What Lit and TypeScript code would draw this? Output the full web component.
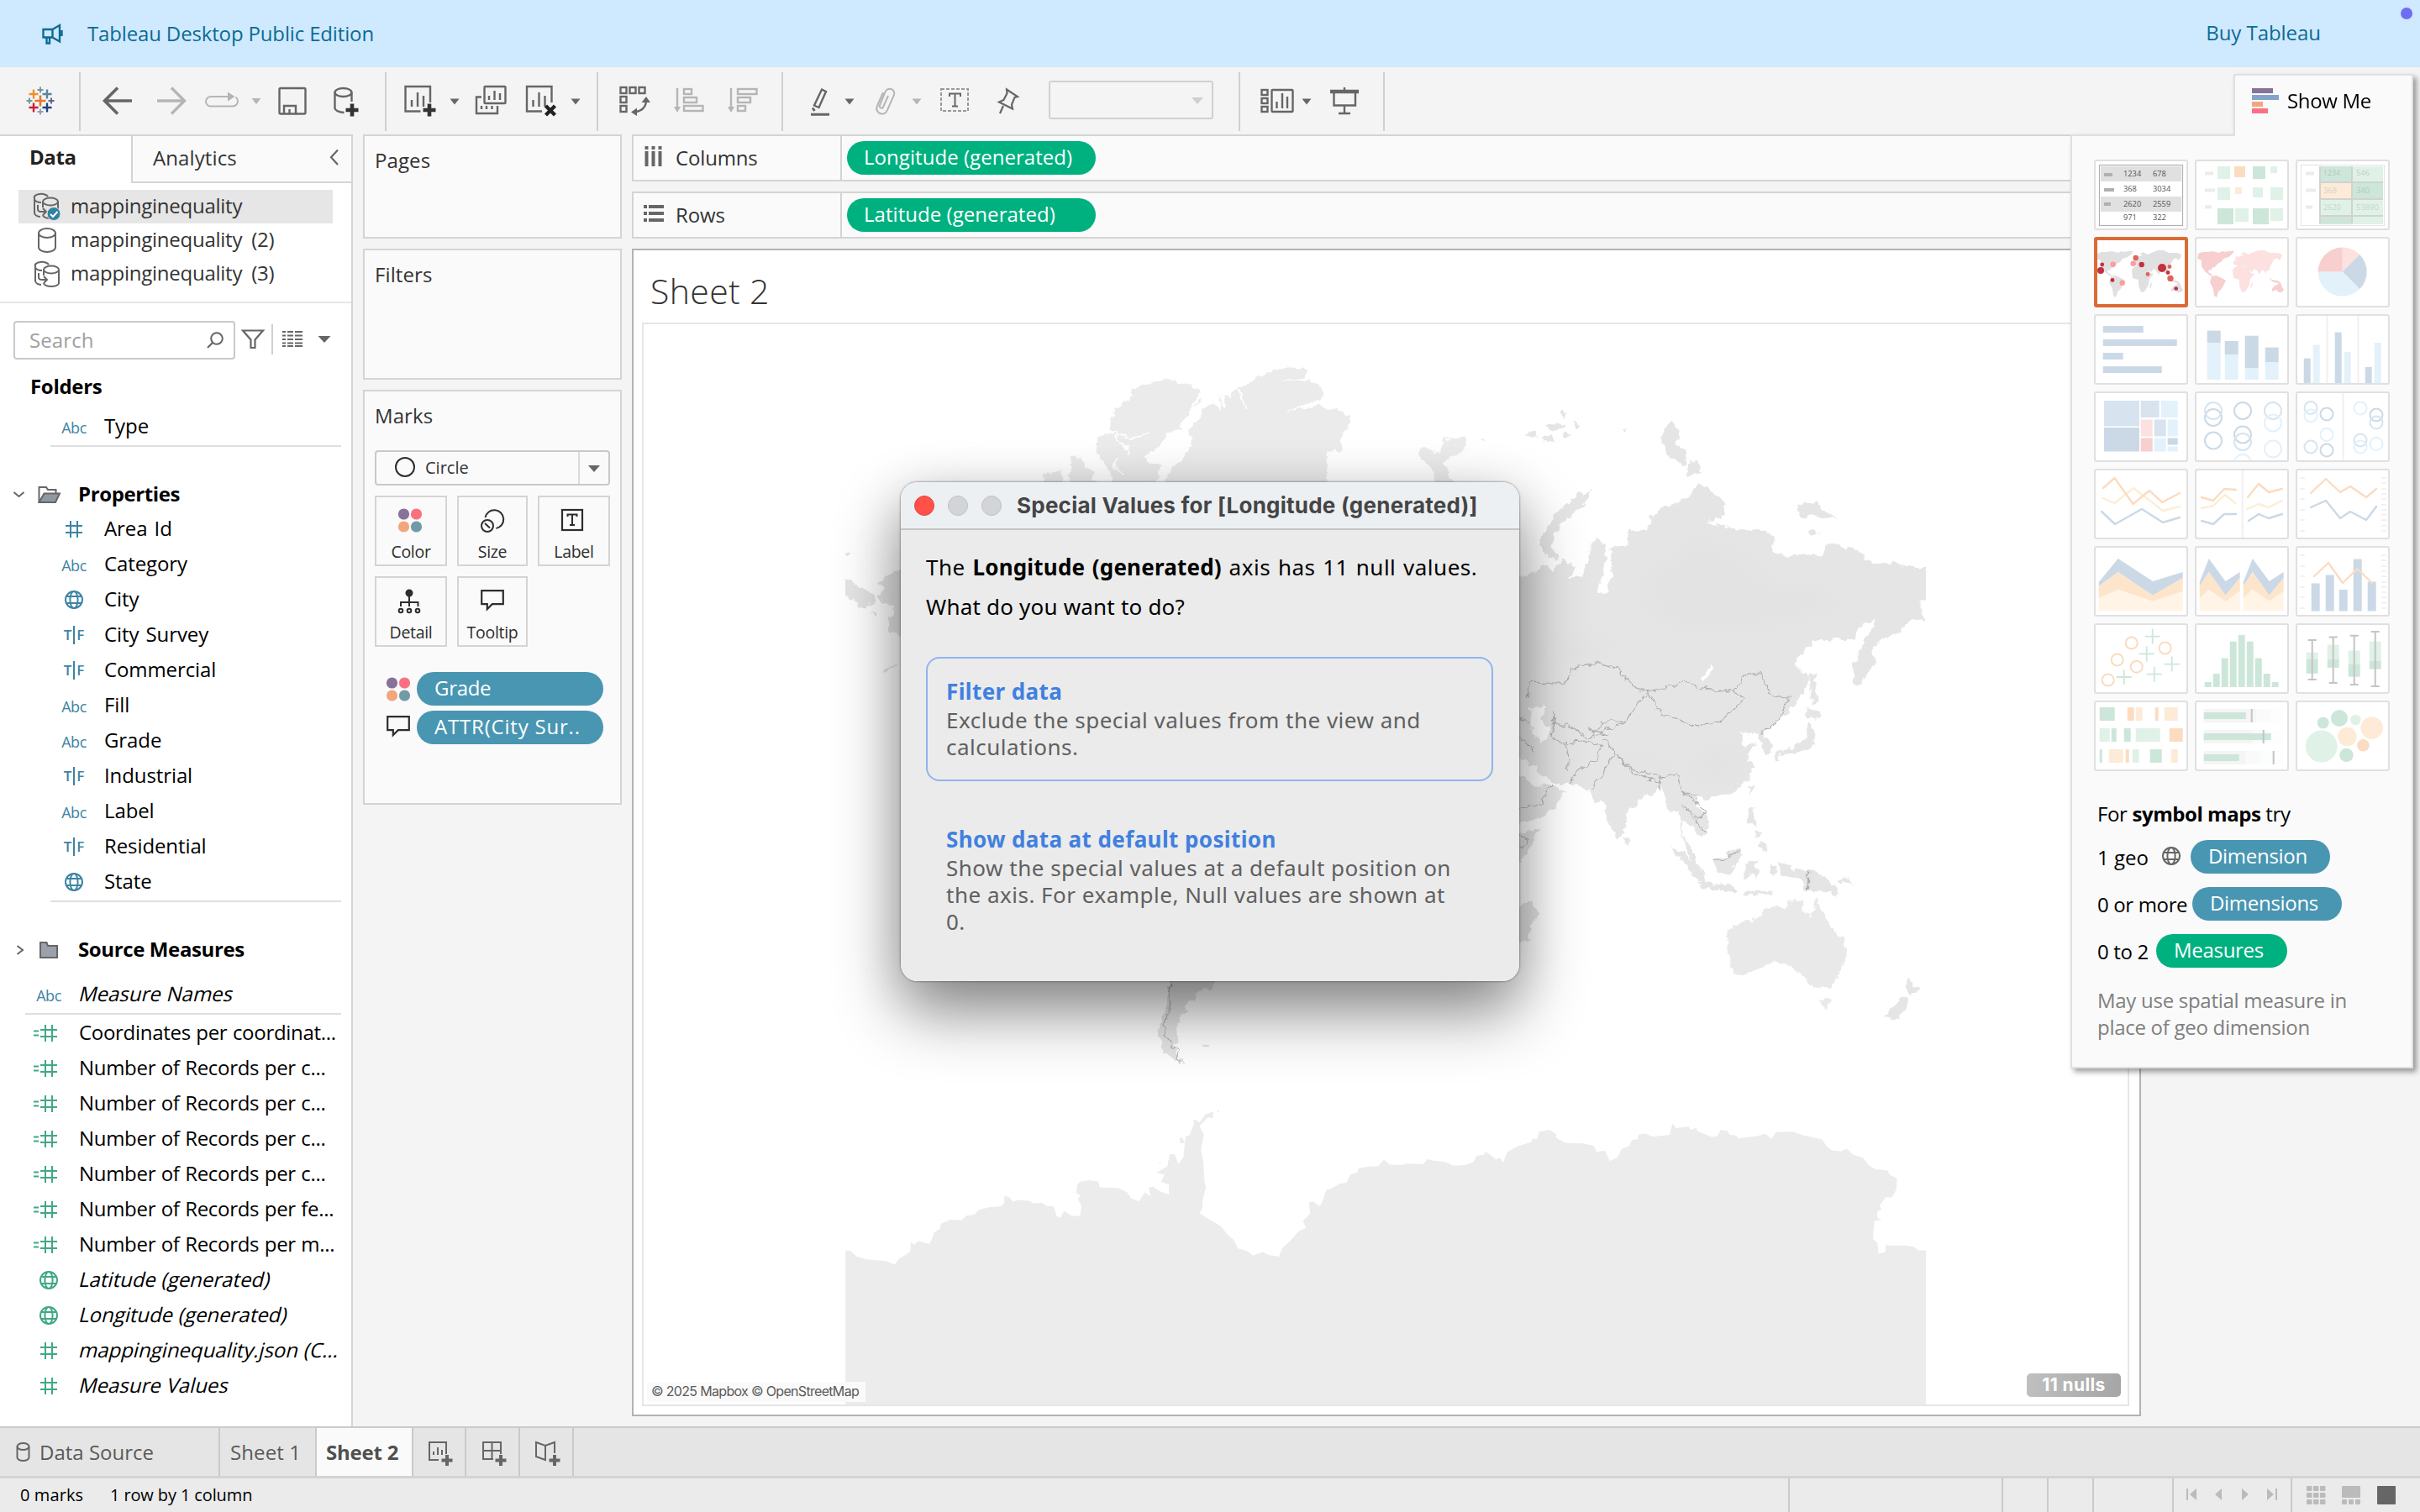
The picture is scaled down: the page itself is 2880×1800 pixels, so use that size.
import { LitElement, html, svg, css } from "lit";
import { customElement } from "lit/decorators.js";

const G = "#666666";
const L = "#b5b5b5";
const D = "#333333";

const pts = (a: number[][]) => a.map((p) => p.join(",")).join(" ");
const caret = (x: number, y: number, c = G, w = 12, h = 8) =>
  svg`<path d="M${x - w / 2} ${y - h / 2}h${w}l${-w / 2} ${h}z" fill=${c} stroke="none" />`;
const plus = (x: number, y: number, r: number, c: string, w: number) =>
  svg`<path d="M${x - r} ${y}h${2 * r}M${x} ${y - r}v${2 * r}" stroke=${c} stroke-width=${w} fill="none" />`;

/* A slice of the window, x0..x1 wide, drawn in window coordinates. */
const cell = (x0: number, x1: number, y0: number, y1: number, body: unknown) =>
  html`<svg class="cell" width=${x1 - x0} height=${y1 - y0} viewBox="${x0} ${y0} ${x1 - x0} ${y1 - y0}" fill="none" stroke=${G} stroke-width="2.4">${body}</svg>`;
const tool = (x0: number, x1: number, body: unknown) => cell(x0, x1, 86, 156, body);

/* ---------- field icons ---------- */
const hash = (c: string) => svg`<path d="M-10 -4H10M-10 4H10M-4 -10V10M4 -10V10" stroke=${c} stroke-width="2" fill="none" />`;
const globe = (c: string) => svg`<g fill="none" stroke=${c} stroke-width="2"><circle r="10" /><ellipse rx="4.6" ry="10" /><path d="M-9 -4H9M-9 4H9" /></g>`;
const kinds: Record<string, () => unknown> = {
  abc: () => html`<span class="abc">Abc</span>`,
  tf: () => html`<span class="tf"><b>T</b><i></i><b>F</b></span>`,
  num: () => html`<svg width="24" height="24" viewBox="-12 -12 24 24">${hash("#3d84a3")}</svg>`,
  geo: () => html`<svg width="24" height="24" viewBox="-12 -12 24 24">${globe("#3d84a3")}</svg>`,
  gnum: () => html`<svg width="24" height="24" viewBox="-12 -12 24 24">${hash("#41a884")}</svg>`,
  ggeo: () => html`<svg width="24" height="24" viewBox="-12 -12 24 24">${globe("#41a884")}</svg>`,
  calc: () => html`<svg width="42" height="24" viewBox="-21 -12 42 24"><path d="M-18 -2.5h6M-18 2.5h6" stroke="#41a884" stroke-width="2" />${hash("#41a884")}</svg>`,
};

const properties: [string, string][] = [
  ["num", "Area Id"], ["abc", "Category"], ["geo", "City"], ["tf", "City Survey"], ["tf", "Commercial"],
  ["abc", "Fill"], ["abc", "Grade"], ["tf", "Industrial"], ["abc", "Label"], ["tf", "Residential"], ["geo", "State"],
];
const measures: [string, string, boolean][] = [
  ["calc", "Coordinates per coordinat...", false],
  ["calc", "Number of Records per c...", false],
  ["calc", "Number of Records per c...", false],
  ["calc", "Number of Records per c...", false],
  ["calc", "Number of Records per c...", false],
  ["calc", "Number of Records per fe...", false],
  ["calc", "Number of Records per m...", false],
  ["ggeo", "Latitude (generated)", true],
  ["ggeo", "Longitude (generated)", true],
  ["gnum", "mappinginequality.json (C...", true],
  ["gnum", "Measure Values", true],
];

/* ---------- chart thumbnails, 112 x 84 ---------- */
const B = "#cbd9e6", M = "#d7e4ef", LB = "#e3f1fb", P = "#f6cfce", LP = "#fde0e0";
const GR = "#cde6da", LG = "#e0f2e7", O = "#fbdcc0", LO = "#fdebd8", Y = "#fdeed4";
const R = (x: number, y: number, w: number, h: number, f: string) => svg`<rect x=${x} y=${y} width=${w} height=${h} fill=${f} />`;
const C = (x: number, y: number, r: number, f: string) => svg`<circle cx=${x} cy=${y} r=${r} fill=${f} />`;
const ring = (x: number, y: number, r: number, c: string) => svg`<circle cx=${x} cy=${y} r=${r} fill="none" stroke=${c} stroke-width="2" />`;
const line = (c: string, a: number[][]) => svg`<polyline points=${pts(a)} fill="none" stroke=${c} stroke-width="2.4" stroke-linejoin="round" stroke-linecap="round" />`;
const poly = (c: string, a: number[][]) => svg`<polygon points=${pts(a)} fill=${c} />`;
const num = (x: number, y: number, t: string, c: string, w: number) =>
  svg`<text x=${x} y=${y} fill=${c} font-size="9" textLength=${w} lengthAdjust="spacingAndGlyphs">${t}</text>`;
const dashes = (c: string) => [R(12, 14.5, 10, 4, c), R(12, 34.5, 12, 4, c), R(12, 54.5, 8, 4, c)];
const ticks = svg`<path d="M5 11h6M5 24h6M5 36h6M5 49h6M5 61h6M5 74h6M102 11h6M102 17h6M102 24h6M102 30h6M102 36h6M102 43h6M102 49h6M102 55h6M102 61h6M102 68h6M102 74h6" stroke="#eeeeee" stroke-width="1.6" />`;
const mini = (america: string, rest: string) => svg`
  <g fill=${america}>
    <path d="M4 20l5-2 6 0 6-1 8 2 4-1 4 3 2 3-5 2-3 4-4 2-3 4-4 1 0 3-3-1-1 3 3 2 3 3-4-1-6-5-4-6 0-7-5-2zM29 18l6-1 0 3zM35 18l6-1 6 0-3 4-4 3-2 1-2-4z"/>
    <path d="M20 47l6-1 6 3 5 3-3 6-3 5-3 2-1 4-1 3-3-2-1-8-4-8z"/>
    <path d="M92 62l3-4 3-1 2-2 3 1 1 4 2 3-3 3-3 0-3-3-5 2zM88 48l4 5 7 2 4 0-5-3-6-1z"/>
  </g>
  <g fill=${rest}>
    <path d="M45 39l4-4 6-1 4 2 5 1 3 6 4 1-5 6-1 7-5 8-4 1-3-8 0-7-7-2zM67 56l2-2-1 6-2 1z"/>
    <path d="M46 33l0-4 4-2 0-2 4-2 2 0 2-2-4 0 4-3 6 3 4-2 8-3 7 0 6 3 10 0 5 2-1 4-3 3-2-3-4 2-2 4-2 4-2 5-3 1 0 4-2-4-3-2-3 6-3-5-3-2-3 4-3-3-4-2-4-3-4 1-5-2zM50 27l-2-1 2-4 1 2z"/>
  </g>`;
const area = svg`${poly(B, [[5.7, 43], [28.7, 15], [70, 42], [105.7, 31], [105.7, 38], [70, 59], [28.7, 31], [5.7, 48]])}
  ${poly("#fde5cb", [[5.7, 48], [28.7, 31], [70, 58.5], [105.7, 38], [105.7, 54], [70, 66], [28.7, 52], [5.7, 62.5]])}
  ${poly("#fff4e6", [[5.7, 62.5], [28.7, 52], [70, 66], [105.7, 54], [105.7, 77.5], [5.7, 77.5]])}`;
const boxes = [[12.7, 34.7, 42.5, 59.8, 20, 67], [37.7, 25.6, 43, 52.9, 16.5, 71], [62.7, 32.5, 48.6, 63.7, 14.7, 73], [87.7, 21.7, 44.7, 54.6, 10, 75]];
const worldDots: [number, number, number, string][] = [
  [9.7, 33, 2.4, "#c3303f"], [8, 40, 4, "#c3303f"], [56.7, 33, 3.2, "#c3303f"], [81, 37, 5, "#c3303f"], [88, 42.5, 2.4, "#c3303f"],
  [22, 51.5, 2.4, "#c3303f"], [97.7, 61.6, 2.4, "#c3303f"], [49.7, 25, 3.2, "#e0645a"], [90, 35.5, 2.4, "#e0645a"],
  [64, 44.5, 2.4, "#e0645a"], [91, 49.4, 3.7, "#e0645a"], [22.7, 32.7, 3.2, "#fb9d9b"], [46.7, 31.8, 3.2, "#fb9d9b"], [33.7, 54.7, 3.2, "#fb9d9b"],
];
const thumbs: unknown[] = [
  svg`<rect x="6.5" y="6.5" width="99" height="72" fill="none" stroke="#b0b0b0" stroke-width="1.2" />${R(8, 8, 96, 18, "#e0e0e0")}${R(8, 44, 96, 18, "#e0e0e0")}
    ${R(12, 16, 10, 4, "#b0b0b0")}${R(12, 34, 12, 4, "#b0b0b0")}${R(12, 51, 8, 4, "#b0b0b0")}
    ${[["1234", "678"], ["368", "3034"], ["2620", "2559"], ["971", "322"]].map((r, i) => [num(35, [20, 38, 56, 72][i], r[0], "#555", r[0].length * 5.3), num(70, [20, 38, 56, 72][i], r[1], "#555", r[1].length * 5.3)])}`,
  svg`${dashes("#ebebeb")}${R(27, 8, 15, 15, LG)}${R(47, 8, 13, 13, O)}${R(69, 8, 15, 15, GR)}${R(90, 8, 8, 8, LG)}${R(27, 33, 15, 15, LG)}${R(48, 33, 8, 8, LO)}${R(69, 33, 12, 12, LG)}${R(90, 33, 15, 15, LG)}${R(27, 58, 19, 19, GR)}${R(48, 58, 16, 16, LG)}${R(69, 58, 19, 19, GR)}${R(90, 58, 15, 15, LG)}`,
  svg`<rect x="6.5" y="6.5" width="99" height="72" fill="none" stroke="#e6e6e6" stroke-width="1.2" />${dashes("#ebebeb")}${R(28, 8, 76, 68.5, "#d2d2d2")}
    ${R(30, 8, 36, 18, GR)}${R(68, 8, 36, 18, LG)}${R(30, 28, 36, 18, LO)}${R(68, 28, 36, 18, GR)}${R(30, 48, 36, 18, LG)}${R(68, 48, 36, 18, LG)}${R(30, 68, 36, 8.5, GR)}${R(68, 68, 36, 8.5, LG)}
    ${num(33, 19, "1234", "#b4c9be", 20)}${num(72, 19, "546", "#c2cdc8", 16)}${num(33, 40, "368", "#d8cfc5", 16)}${num(72, 40, "340", "#b4c9be", 16)}${num(33, 60, "2620", "#c8d3cd", 21)}${num(72, 60, "53890", "#c8d3cd", 27)}`,
  svg`${mini("#e0e0e0", "#e0e0e0")}${worldDots.map((d) => C(d[0], d[1], d[2], d[3]))}`,
  mini(P, LP),
  svg`<g transform="translate(55.7,41.6)"><path d="M0 0V-29A29 29 0 0 1 20.5 -20.5z" fill=${LP} /><path d="M0 0L20.5 -20.5A29 29 0 0 1 20.5 20.5z" fill=${B} /><path d="M0 0L20.5 20.5A29 29 0 0 1 -29 0z" fill=${LB} /><path d="M0 0H-29A29 29 0 0 1 0 -29z" fill=${P} /></g>`,
  svg`${R(10.7, 14, 48, 8, B)}${R(10.7, 30, 88, 8, B)}${R(10.7, 46, 24, 8, B)}${R(10.7, 62, 70, 8, B)}`,
  svg`${[[14.7, 19.6, 34], [35.7, 32, 48], [59.7, 25.7, 64], [83.7, 39.6, 57.5]].map((b) => [R(b[0], b[1], 16, b[2] - b[1], B), R(b[0], b[2], 16, 78 - b[2], LB)])}`,
  svg`<path d="M37.5 2V82M74.5 2V82" stroke="#f0f0f0" stroke-width="2" />${[[9.7, 52.6, 0], [20.7, 36.7, 1], [46.7, 21.6, 0], [57.7, 45, 1], [82.7, 63, 0], [93.7, 34, 1]].map((b) => R(b[0], b[1], 8, 82 - b[1], b[2] ? LB : B))}`,
  svg`${R(12, 11, 42, 30.5, M)}${R(12, 43, 42, 28.5, B)}${R(55.7, 11, 22, 20, M)}${R(79.7, 11, 20, 20, LB)}${R(55.7, 33.5, 14, 20, LP)}${R(71.7, 33.5, 14, 20, M)}${R(87.7, 33.5, 12, 20, LB)}${R(55.7, 55.5, 14, 16, P)}${R(71.7, 55.5, 14, 16, LB)}${R(87.7, 55.5, 12, 8, B)}${R(87.7, 65.5, 12, 6, LB)}`,
  svg`${ring(22, 31, 10, B)}${ring(22, 23, 10, M)}${ring(57, 23, 10, B)}${ring(93, 23, 10, M)}${ring(93, 37.5, 10, LB)}${ring(22, 58.5, 10, B)}${ring(57, 51.5, 10, B)}${ring(57, 60, 10, M)}${ring(93, 68.5, 10, LB)}${ring(57, 85, 10, LB)}`,
  svg`<path d="M56.5 2V82" stroke="#f0f0f0" stroke-width="2" />${ring(18, 19.5, 7.5, M)}${ring(18, 29, 7.5, LB)}${ring(37, 27, 7.5, B)}${ring(37, 51.5, 7.5, LB)}${ring(18, 66, 7.5, M)}${ring(37, 70, 7.5, B)}${ring(77, 20, 7.5, LB)}${ring(96, 28, 7.5, B)}${ring(96, 37, 7.5, M)}${ring(77, 58, 7.5, M)}${ring(77, 66, 7.5, LB)}${ring(96, 62.5, 7.5, LB)}`,
  svg`${line(Y, [[10, 35], [24.5, 41], [47, 23], [82, 50], [102, 45]])}${line(O, [[11, 23], [24.5, 11], [46.5, 42], [66, 26], [81, 40], [102, 29]])}${line(B, [[9, 51], [25, 66], [57, 48], [82, 64], [102, 58]])}`,
  svg`<path d="M56.7 2V82" stroke="#f0f0f0" stroke-width="2" />${line(O, [[8, 34], [22, 38], [35, 24], [49, 25]])}${line(O, [[63, 34], [76, 18], [88, 28], [104, 24]])}${line(Y, [[8, 47], [22, 44], [36, 31], [48, 41]])}${line(Y, [[62, 48], [76, 42], [88, 46], [104, 38]])}${line(B, [[8, 62], [22, 66], [35, 54], [49, 54]])}${line(B, [[64, 62], [76, 54], [88, 59], [104, 54]])}`,
  svg`${ticks}${line(O, [[18, 29], [36, 12], [53, 28], [65, 21], [84, 34], [96, 24]])}${line(B, [[18, 46], [36, 38], [53, 59], [65, 51], [84, 61], [96, 45]])}`,
  area,
  svg`<g transform="translate(5.7,0) scale(.48,1) translate(-5.7,0)">${area}</g><g transform="translate(57.7,0) scale(.48,1) translate(-5.7,0)">${area}</g>`,
  svg`${ticks}${[[18.7, 44.5], [35.7, 34.5], [51.7, 52], [68.7, 15.6], [85.7, 42.5]].map((b) => R(b[0], b[1], 10, 77.5 - b[1], B))}${line(O, [[22, 36], [39, 20], [56, 44], [73.5, 27], [91, 44]])}`,
  svg`${[[44.7, 23.5], [84.7, 29.5], [27.7, 43.5], [50.7, 51.7], [16.7, 67.5]].map((c) => ring(c[0], c[1], 7, O))}${[[69.7, 15.6], [62.7, 36.4], [92.7, 48.6], [71.7, 60.7], [35.7, 64]].map((c) => plus(c[0], c[1], 9, GR, 1.8))}`,
  svg`${[70, 60, 41.6, 21.7, 13.9, 21.7, 41.6, 60, 70].map((t, i) => R(11.7 + i * 10, t, 8, 76 - t, GR))}`,
  svg`${boxes.map((b) => svg`${R(b[0], b[1], 14, b[2] - b[1], LG)}${R(b[0], b[2], 14, b[3] - b[2], GR)}<path d="M${b[0] + 7} ${b[4]}V${b[5]}M${b[0] + 2} ${b[4]}h10M${b[0] + 2} ${b[5]}h10" stroke="#c4c4c4" stroke-width="2" />`)}`,
  svg`${[[6.7, 18, GR], [39.7, 8, O], [49.7, 8, LO], [72.7, 4, O], [83.7, 16, LO]].map((b: any) => R(b[0], 8, b[1], 16, b[2]))}${[[6.7, 12, LG], [20.7, 6, GR], [35.7, 8, GR], [49.7, 29, LG], [89.7, 16, O]].map((b: any) => R(b[0], 33, b[1], 16, b[2]))}${[[6.7, 3, GR], [17.7, 17, LO], [37.7, 4, O], [45.7, 8, LG], [66.7, 14, GR], [91.7, 8, LO]].map((b: any) => R(b[0], 58, b[1], 16, b[2]))}`,
  svg`${[[10, 50, 62, 67.7], [35, 80, 58, 81.7], [60, 42, 50, 93.7]].map((b) => [R(10.7, b[0], 94, 16, "#fcfdfd"), R(10.7, b[0], b[2] + 17, 16, "#fafafa"), R(10.7, b[0], b[2], 16, "#f5f5f5"), R(10.7, b[0] + 4, b[1], 8, GR), R(b[3] - 1, b[0], 2, 16, "#c4c4c4")])}`,
  svg`${C(30.7, 54.6, 19, LG)}${C(32.7, 26.5, 7, GR)}${C(52, 21, 10, GR)}${C(71.4, 23, 6.3, LG)}${C(61.4, 43, 11.3, LO)}${C(90.7, 32.5, 13.3, LO)}${C(80.4, 53.3, 7.3, O)}${C(60.4, 65, 8.3, GR)}`,
];

/* ---------- world map ---------- */
const worldMap = html`<svg class="world" viewBox="766 386 1768 1286" width="1768" height="1286">
  <defs>
    <filter id="coast" x="-2%" y="-2%" width="104%" height="104%">
      <feTurbulence type="fractalNoise" baseFrequency="0.11" numOctaves="3" seed="4" />
      <feDisplacementMap in="SourceGraphic" scale="10" xChannelSelector="R" yChannelSelector="G" />
    </filter>
    <filter id="soft"><feGaussianBlur stdDeviation="14" /></filter>
    <clipPath id="extent"><rect x="1006" y="386" width="1286" height="1286" /></clipPath>
  </defs>
  <g clip-path="url(#extent)">
    <g filter="url(#coast)"><g transform="translate(980,400) scale(.8673,.574)">
      <g fill="#ebebeb">
        <path d="M470 303L472 290 478 272 490 258 503 240 505 215 500 195 515 175 520 150 535 140 545 155 545 120 560 130 560 112 580 100 600 85 615 70 640 65 665 70 660 92 682 100 688 125 640 155 682 145 690 155 705 150 722 170 720 195 710 205 712 235 692 240 690 303 692 340 560 350z" />
        <path d="M395 175L400 150 420 130 425 108 450 95 480 92 500 100 515 110 518 135 500 160 490 190 470 205 462 228 440 250 445 262 465 265 455 303 400 310 392 280 375 240 378 210 395 200z" />
        <path d="M340 248l12 6 8 18 12 10-4 16 12 8-40 4-2-30zM305 285l20-6 6 26-32 2z" />
        <path d="M817 235l18-3 10 13 7-33 28 3 2 20-20 15-12 12 5 23 15 26-30 0-5-40-15-15z" />
      </g>
      <path fill="none" stroke="#ffffff" stroke-width="3" d="M518 120L500 165 485 205 462 240M375 205L400 200 425 212 445 200M400 205L420 245M545 110L550 150M565 100L580 150M640 155L685 140M630 92L662 88M405 250L398 270 412 288" />
      <g fill="#e5e5e5">
        <path d="M962 205l14-8 4 14zM990 182l20-4 8 10-20 12zM1012 155l8 6-6 12zM1028 178l12 6-6 12zM985 210l14-4 6 10-16 4zM1015 200l12 4-8 8zM900 215l8 0-2 6zM1097 192l6 0 0 6z" />
        <path d="M1150 200L1163 178 1174 195 1170 225 1184 240 1182 268 1165 255 1150 225zM1187 260l13 0 7 22-22 6z" />
        <path d="M1055 320L1045 350 1025 370 1005 405 1000 435 1010 462 990 458 983 425 995 390 1010 360 1035 330z" />
        <path d="M1335 350l30-6 5 18 20 12-16 4-14-8-20 8zM1350 400l10 0 4 12-10 2z" />
        <path d="M940 510L975 492 985 475 1000 488 1015 460 1032 480 1025 500 1045 495 1052 440 1062 415 1074 440 1070 490 1062 535 1075 532 1082 490 1080 440 1105 438 1105 408 1130 400 1135 375 1170 345 1190 335 1200 303 1215 318 1238 345 1232 375 1210 385 1255 403 1290 402 1305 420 1302 445 1320 460 1340 450 1368 455 1378 430 1410 440 1440 468 1500 478 1520 488 1520 545 1505 550 1510 590 1490 590 1480 612 1455 628 1440 640 1442 680 1425 715 1415 722 1412 690 1425 640 1445 590 1420 600 1415 628 1380 630 1360 632 1345 655 1332 685 1352 705 1345 740 1325 780 1310 800 1290 822 1303 860 1292 868 1282 825 1258 822 1262 850 1280 842 1268 868 1275 895 1270 920 1250 945 1215 962 1198 955 1197 975 1215 1000 1213 1025 1200 1035 1190 1015 1178 1005 1180 1040 1195 1065 1198 1100 1183 1065 1177 1030 1175 985 1160 985 1155 960 1148 935 1135 950 1118 965 1102 990 1100 1030 1088 1042 1078 1010 1070 965 1058 968 1050 940 1028 930 1000 925 985 905 960 880 940 870z" />
        <path d="M940 890L975 935 1000 930 1017 945 1005 975 985 1000 940 1012zM940 1035L982 1020 970 1065 940 1120zM940 1195L975 1172 979 1200 966 1255 940 1262z" />
        <path d="M1352 700l8 0 4 60-8 4zM1100 1036l8 12-6 8zM1268 935l8-2-4 18zM1350 772l20 8-8 16-14-8zM1352 800l10 20-6 34-20 10-24 4-2 14-6-2 4-18 28-10 10-16z" />
        <path d="M1268 978l10 2 2 34-10-4zM1284 1045l10 4 0 20-12-6zM1278 1020l8 14-6 6z" />
        <path d="M1163 1060l14 6 32 44 2 24-14-10zM1200 1130l50 12 6 12-50-10zM1222 1085l16-6 20-20 2 20-14 36-22-2zM1264 1092l24-4-14 10 10 6-4 24-6-16-8 16zM1298 1100l8 4-2 20zM1262 1150l40 0 0 8-40 0zM1308 1092l20 6 0 10 28-2 26 22 10 32-22-8-20 0-10-26-24-8z" />
        <path d="M1390 1130l18-6 2 8-16 6zM1405 1120l10 14-6-2z" />
        <path d="M1487 1327l8 18 10 6-13 22-6-12zM1480 1370l10 8-18 42-15-10z" />
        <path d="M28 500L50 520 65 530 70 550 50 565 45 545 28 540zM28 448l10 4-10 6zM110 475L85 500 75 512 85 525 72 540 80 555 100 562 90 585 90 610 110 625zM65 576l10 2-4 6zM82 692l22-12-20 18z" />
        <path d="M478 1320L540 1320 536 1340 530 1355 510 1360 510 1375 495 1385 500 1400 490 1410 485 1440 490 1460 480 1470 485 1490 497 1508 478 1500 465 1480 460 1440 468 1400zM520 1470l12 0-6 6z" />
      </g>
      <path fill="#e9e9e9" d="M1240 1240L1250 1220 1280 1210 1290 1190 1310 1180 1320 1190 1325 1170 1345 1170 1342 1190 1355 1205 1362 1163 1372 1195 1380 1220 1400 1250 1403 1290 1392 1330 1380 1354 1355 1350 1345 1325 1335 1320 1325 1305 1300 1300 1275 1318 1250 1325 1245 1300 1240 1265zM1368 1375l14 0-4 20-8-3z" />
      <path fill="#ffffff" d="M968 772L992 765 985 795 997 815 985 848 976 830zM1202 713L1220 677 1221 690 1206 716z" />
    </g></g>
    <g filter="url(#soft)" transform="translate(980,400) scale(.8673,.574)" fill="#dfdfdf" opacity=".3">
      <path d="M1200 420l60 40 40 60 60 0 30 40-60 30-80 20-90-10-40-80zM1060 850l50 20 60 20-10 14-60-14zM1200 870l50-20 10 50-30 30-30-20zM1000 640l60-30 20 60-70 20z" />
    </g>
    <g filter="url(#coast)"><g transform="translate(980,400) scale(.8673,.574)" fill="none" stroke="#adadad" stroke-width="1.2">
      <path vector-effect="non-scaling-stroke" d="M965 750L970 720 1000 720 1022 715 1025 690 1060 678 1090 690 1110 725 1130 740 1115 770 1100 800 1070 800 1050 835 1020 805 1000 805 1003 780M1130 740L1180 720 1220 735 1250 735 1262 755 1230 800 1200 808 1150 785 1130 740M1250 735L1265 700 1285 700 1300 745 1325 750 1310 800 1285 822M1070 835L1090 870 1110 900 1150 912 1150 925 1110 908 1090 870M1150 915L1170 910 1180 945 1200 955M1085 870L1072 900 1052 942M1000 805L1000 835 1020 845 1045 840 1068 850 1060 880 1030 905 1025 930M1020 845L1022 900M1050 835L1070 820 1100 800M1050 815L1080 830M1150 915L1145 945M1175 975L1190 985 1200 1000 1212 990 1195 965 1180 945M1195 1000L1210 1030M955 980L985 970 1000 930M955 830L975 860M955 790L970 800M1352 1108V1150M1222 1088L1240 1082 1256 1065M476 1340L474 1400 466 1440 478 1475 488 1478 488 1508M955 1035L968 1045 955 1062" />
    </g></g>
    <g transform="translate(980,1290) scale(.8673,.3394)" fill="#ececec">
      <path d="M30 585L37 587 46 607 60 617 85 622 98 635 103 615 119 590 120 553 124 566 130 552 145 563 149 545 152 522 160 508 161 492 174 477 190 479 196 463 207 459 213 443 229 433 243 431 248 420 248 394 254 397 260 414 266 408 284 412 287 420 300 418 306 429 316 431 320 465 325 471 330 447 340 463 352 465 354 430 349 404 353 392 347 385 348 356 352 344 365 339 377 343 379 364 404 366 417 382 422 402 433 413 441 381 449 396 446 365 452 362 462 378 474 390 474 354 463 345 468 320 457 312 472 290 475 247 482 248 487 282 494 257 497 184 502 182 508 144 510 126 516 136 524 108 535 97 534 122 528 118 516 148 522 180 518 232 521 268 523 350 525 362 520 410 520 437 516 455 545 500 556 534 562 545 569 578 582 588 589 603 603 591 611 601 625 607 630 575 640 553 652 518 662 507 658 482 668 456 666 417 672 414 681 430 685 410 690 373 698 367 708 351 718 347 723 318 732 312 735 297 748 291 761 290 769 267 777 284 793 286 800 281 823 282 829 265 840 272 853 274 864 288 880 286 892 275 896 254 906 250 909 239 923 266 928 260 933 277 938 241 952 220 971 205 973 192 979 195 982 169 996 162 1006 178 1005 190 1018 208 1042 210 1057 218 1061 240 1072 234 1079 272 1090 258 1095 230 1106 218 1109 198 1117 195 1119 178 1128 175 1138 186 1161 180 1165 140 1170 156 1187 150 1190 163 1197 155 1200 168 1220 188 1227 183 1231 162 1240 166 1244 180 1252 182 1256 192 1268 188 1281 184 1292 176 1301 193 1307 170 1329 168 1345 182 1370 195 1377 222 1384 234 1396 238 1404 228 1413 249 1426 260 1434 286 1443 300 1460 305 1463 320 1473 333 1472 372 1466 400 1458 398 1449 428 1452 440 1446 450 1446 470 1452 478 1442 482 1440 545 1446 558 1448 597 1457 590 1458 564 1463 568 1486 568 1497 574 1502 585 1513 585 1513 1150 30 1150z" />
      <path d="M489 208l0-20 4 4 3 18zM460 276l3 0-2 6zM539 96l4-2 0 8zM507 124l6 14-4 8z" />
    </g>
  </g>
</svg>`;

const dots = (cx: number, cy: number) => svg`<g stroke="none"><circle cx=${cx - 7.5} cy=${cy - 7.5} r="6.6" fill="#87729a" /><circle cx=${cx + 7.5} cy=${cy - 7.5} r="6.6" fill="#fa7181" /><circle cx=${cx - 7.5} cy=${cy + 7.5} r="6.6" fill="#f3a67c" /><circle cx=${cx + 7.5} cy=${cy + 7.5} r="6.6" fill="#7299a6" /></g>`;
const bubble = (x: number, y: number) => svg`<path d="M${x + 1.2} ${y + 1.2}h25.6v16h-13l-6 6v-6h-6.6z" stroke="#2d2d2d" stroke-width="2.2" />`;
const chartFrame = (x: number, y: number) => svg`<path d="M${x + 29.5} ${y + 19}V${y}H${x}V${y + 29.5}H${x + 18}" /><path d="M${x + 7.5} ${y + 24}v-8M${x + 14.5} ${y + 24}v-17M${x + 21.5} ${y + 24}v-13" />`;
const cylinder = (x: number, y: number, w: number, h: number, r: number) =>
  svg`<ellipse cx=${x + w / 2} cy=${y + r} rx=${w / 2} ry=${r} stroke-width="2" /><path d="M${x} ${y + r}V${y + h - r}a${w / 2} ${r} 0 0 0 ${w} 0V${y + r}" stroke-width="2" />`;
const linked = (x: number, y: number) => svg`
  <path d="M${x + 17} ${y + 4}a8 4 0 0 0 -16 2v17a8 5 0 0 0 7 5M${x + 1} ${y + 7}a8 4 0 0 0 8 4M${x + 5} ${y + 14}v5q0 3 4 3h6m-4 -4l4 4l-4 4" stroke-width="2" />
  <ellipse cx=${x + 20} cy=${y + 10} rx="9" ry="4.5" stroke-width="2" /><path d="M${x + 11} ${y + 10}v7M${x + 11} ${y + 26}a9 4 0 0 0 18 0V${y + 10}" stroke-width="2" />`;

@customElement("app-root")
export class AppRoot extends LitElement {
  static styles = css`
    :host { display: block; }
    * { box-sizing: border-box; }
    svg { display: block; flex: none; }
    .app {
      position: relative; width: 2880px; height: 1800px; overflow: hidden; display: flex; flex-direction: column;
      background: #f4f4f4; color: #333; font: 24px "Open Sans", "Liberation Sans", sans-serif; letter-spacing: -0.35px; white-space: nowrap;
    }
    .banner { height: 80px; flex: none; background: #cfe9fe; display: flex; align-items: flex-start; color: #0c6b94; line-height: 79px; }
    .banner .buy { margin-left: auto; margin-right: 118px; line-height: 77px; letter-spacing: -0.05px; }
    .banner .title { letter-spacing: -0.15px; }
    .live { position: absolute; left: 2857px; top: 9px; width: 14px; height: 14px; border-radius: 50%; background: #6e6cf5; }
    .toolbar { height: 80px; flex: none; display: flex; padding-top: 6px; }
    .sep { width: 2px; height: 70px; background: #d0d0d0; flex: none; }
    .main { height: 1538px; flex: none; display: flex; gap: 12px; }

    .pane { width: 420px; flex: none; background: #fff; border-top: 2px solid #d4d4d4; border-right: 2px solid #d4d4d4; overflow: hidden; }
    .tabs { display: flex; height: 56px; line-height: 50px; }
    .tab-data { width: 156px; padding-left: 35px; font-weight: 700; color: #222; letter-spacing: -0.4px; }
    .tab-analytics { flex: 1; display: flex; justify-content: space-between; padding-left: 24px; background: #fafafa; border-left: 2px solid #d4d4d4; border-bottom: 2px solid #d4d4d4; letter-spacing: 0.1px; line-height: 52px; }
    .sources { padding: 8px 0 13px; border-bottom: 2px solid #e6e6e6; }
    .source { height: 40px; line-height: 38px; margin: 0 22px; padding-left: 14px; display: flex; gap: 10px; letter-spacing: -0.25px; word-spacing: 5px; }
    .source.on { background: #e6e6e6; }
    .search { display: flex; margin: 21px 0 0 16px; height: 46px; }
    .box { width: 264px; height: 46px; border: 2px solid #c9c9c9; border-radius: 4px; display: flex; justify-content: space-between; padding-left: 17px; color: #a0a0a0; line-height: 42px; letter-spacing: 0.1px; }
    .folders { height: 58px; line-height: 64px; padding-left: 36px; font-weight: 700; color: #000; letter-spacing: -0.3px; }
    .field { height: 42px; line-height: 42px; display: flex; gap: 8px; padding-left: 30px; color: #000; letter-spacing: -0.3px; word-spacing: 0.6px; }
    .field.nested { padding-left: 60px; letter-spacing: -0.1px; word-spacing: 2px; }
    .kind { width: 56px; height: 42px; flex: none; display: flex; align-items: center; justify-content: center; padding-top: 1px; }
    .abc { font-size: 18px; color: #3d84a3; letter-spacing: -0.5px; padding-top: 3px; }
    .tf { display: flex; gap: 2px; font-size: 17px; color: #3d84a3; align-items: center; line-height: 20px; }
    .tf b { font-weight: 600; }
    .tf i { width: 2px; height: 22px; background: #3d84a3; }
    .rule { height: 2px; margin: 2px 12px 0 60px; background: #dfdfdf; }
    .rule.wide { margin-left: 30px; }
    .folder { display: flex; height: 41px; line-height: 42px; margin-top: 35px; font-weight: 700; color: #000; letter-spacing: -0.38px; }
    .folder.closed { height: 42px; }
    .it { display: inline-block; height: 42px; margin-left: 1px; transform: skewX(-14deg); letter-spacing: -0.02px; }
    .field.top { margin-top: 11px; }

    .cards { width: 308px; flex: none; display: flex; flex-direction: column; gap: 12px; }
    .card { border: 2px solid #d4d4d4; background: #fafafa; padding-left: 12px; line-height: 58px; letter-spacing: 0.1px; }
    .pages { height: 124px; }
    .filters { height: 156px; }
    .marks { height: 494px; padding: 0 0 0 12px; }
    .marks h3 { margin: 0; font: inherit; line-height: 58px; height: 70px; }
    .select { width: 280px; height: 42px; border: 2px solid #c9c9c9; border-radius: 4px; display: flex; font-size: 20px; line-height: 38px; }
    .select .name { flex: 1; padding-left: 2px; letter-spacing: 0; }
    .btns { display: grid; grid-template-columns: 86px 84px 86px; column-gap: 12px; row-gap: 12px; margin-top: 12px; }
    .btn { height: 84px; border: 2px solid #d4d4d4; display: flex; flex-direction: column; align-items: center; font-size: 19.5px; letter-spacing: -0.3px; line-height: 30px; color: #2d2d2d; }
    .enc { display: flex; height: 40px; margin-bottom: 6px; }
    .encs { margin-top: 30px; }
    .pill { height: 40px; border-radius: 20px; color: #fff; background: #4996b2; padding: 0 21px; line-height: 37px; }
    .pill.green { background: #00b180; }
    .enc .pill { width: 222px; padding-left: 21px; letter-spacing: -0.3px; }
    .enc .pill.attrib { letter-spacing: 0.8px; }

    .center { width: 1796px; flex: none; display: flex; flex-direction: column; gap: 12px; }
    .shelf { height: 56px; border: 2px solid #d4d4d4; background: #fafafa; display: flex; flex: none; }
    .shelf .pill { width: 296px; margin-top: 6px; padding: 0 20px; letter-spacing: 0.05px; }
    .cap { width: 248px; flex: none; border-right: 2px solid #d4d4d4; display: flex; gap: 1px; margin-right: 6px; line-height: 52px; letter-spacing: -0.15px; }
    .view { flex: none; height: 1390px; border: 2px solid #b3b3b3; background: #fff; padding: 0 12px 0 10px; }
    .view h1 { margin: 0; height: 86px; line-height: 97px; padding-left: 10px; font-size: 41px; font-weight: 300; letter-spacing: 0.35px; color: #333; }
    .viz { position: relative; height: 1290px; border: 2px solid #e6e6e6; overflow: hidden; }
    .attr { position: absolute; left: 4px; bottom: 3px; height: 24px; width: 260px; background: #fafafa; padding-left: 5px; font: 16px/23px "Inter", sans-serif; letter-spacing: -0.68px; color: #5a5a5a; }
    .nulls { position: absolute; right: 8px; bottom: 9px; height: 28px; width: 112px; border-radius: 5px; background: linear-gradient(100deg, #c0c0c0, #a5a5a5); color: #fff; font: 700 21px/27px "Inter", sans-serif; letter-spacing: 0.4px; text-align: center; }

    .sheets { height: 62px; flex: none; display: flex; border-top: 2px solid #cacaca; border-bottom: 3px solid #d3d3d3; background: #e5e5e5; color: #5a5a5a; line-height: 58px; }
    .sheet { border-right: 2px solid #cacaca; display: flex; }
    .s0 { width: 262px; letter-spacing: 0; }
    .s1 { width: 115px; padding-left: 12px; letter-spacing: 0.1px; }
    .s2 { width: 115px; padding-left: 11px; background: #fafafa; font-weight: 700; color: #505050; letter-spacing: -0.2px; }
    .status { height: 40px; flex: none; display: flex; background: #ebebeb; color: #000; font-size: 20px; letter-spacing: -0.12px; line-height: 39px; }
    .status .m { width: 131px; padding-left: 24px; flex: none; letter-spacing: 0.1px; }
    .status .r { width: 1999px; border-right: 2px solid #cacaca; flex: none; }
    .status .e1 { width: 254px; border-right: 2px solid #cacaca; }
    .status .e2 { width: 54px; border-right: 2px solid #cacaca; }
    .status .e3 { width: 95px; border-right: 2px solid #cacaca; }

    .showme { position: absolute; left: 2464px; top: 88px; width: 408px; height: 1184px; filter: drop-shadow(4px 4px 3px rgba(0,0,0,.38)); color: #000; }
    .smtab { position: relative; z-index: 1; margin-left: 194px; width: 214px; height: 74px; background: #fafafa; border: 2px solid #e0e0e0; border-bottom: 0; display: flex; gap: 1px; line-height: 60px; }
    .smbody { margin-top: -2px; height: 1112px; background: #fafafa; border: 2px solid #e0e0e0; padding: 28px 26px 0; }
    .grid { display: grid; grid-template-columns: repeat(3, 112px); gap: 8px; }
    .thumb { width: 112px; height: 84px; border: 2px solid #e0e0e0; border-radius: 3px; background: #fff; overflow: hidden; }
    .thumb svg { margin: -2px; font-family: "Open Sans", sans-serif; letter-spacing: 0; }
    .thumb.on { border: 4px solid #dc6a35; }
    .thumb.on svg { margin: -4px; }
    .hint { margin-left: 4px; }
    .hint p { margin: 0; }
    .hint .for { height: 62px; line-height: 62px; margin-top: 20px; }
    .hint .for b { letter-spacing: -0.45px; }
    .need { display: flex; height: 56px; line-height: 42px; }
    .need .pill { line-height: 37px; padding: 0 21px; letter-spacing: -0.3px; }
    .p1 { width: 166px; } .p2 { width: 178px; } .p3 { width: 156px; }
    .n1 { width: 76px; letter-spacing: 0; } .n2 { width: 113px; } .n3 { width: 70px; }
    .hint .note { color: #808080; line-height: 32px; margin-top: 7px; letter-spacing: -0.28px; }

    .dialog { position: absolute; left: 1072px; top: 574px; width: 736px; height: 594px; border-radius: 20px; background: #ebebeb; overflow: hidden; font: 26px "Noto Sans", "Open Sans", sans-serif; letter-spacing: 0.5px; color: #000; }
    .shadow { position: absolute; left: 1072px; top: 574px; width: 736px; height: 594px; border-radius: 20px; box-shadow: 0 0 2px 1px rgba(0,0,0,.28), 0 36px 78px rgba(0,0,0,.46), 0 10px 60px rgba(0,0,0,.1); }
    .bar { height: 57px; background: #ecf0f3; border-bottom: 2px solid #c3c6c8; display: flex; align-items: center; padding-left: 16px; gap: 16px; }
    .light { width: 24px; height: 24px; border-radius: 50%; background: #d2d4d7; border: 1px solid #bfc1c4; }
    .light.red { background: #ff5147; border-color: #e2463f; }
    .bar strong { margin-left: 2px; font: 700 26px/51px "Inter", sans-serif; letter-spacing: 0.24px; color: #454545; height: 52px; }
    .q { margin: 0; padding-left: 30px; line-height: 49px; letter-spacing: 0.2px; }
    .q b { letter-spacing: 0.2px; }
    .q1 { padding-top: 20px; height: 67px; line-height: 48px; word-spacing: 1.5px; letter-spacing: 0.5px; }
    .opt { margin: 0 0 0 30px; width: 675px; border: 2px solid transparent; border-radius: 16px; height: 148px; padding: 21px 0 0 22px; line-height: 32px; color: #606060; }
    .opt b { display: block; color: #4080e0; line-height: 36px; letter-spacing: 0.4px; }
    .opt.on { border-color: #8fb4ee; margin-top: 35px; }
    .opt.second { margin-top: 28px; }
  `;

  private thumb = (t: unknown, i: number) => html`<div class="thumb ${i === 3 ? "on" : ""}"><svg width="112" height="84" viewBox="0 0 112 84">${t}</svg></div>`;

  private field = (kind: string, name: string, cls = "", it = false) => html`
    <div class="field ${cls}"><div class="kind">${kinds[kind]()}</div><span class=${it ? "it" : ""}>${name}</span></div>`;

  private toolbar() {
    return html`<div class="toolbar">
      ${tool(0, 94, [
        plus(48, 120, 6.5, "#e8762c", 2.6), plus(40, 112, 5.5, "#eb912b", 2.4), plus(56, 112, 5.5, "#5b879b", 2.4), plus(40, 128, 5.5, "#c72035", 2.4),
        plus(56, 128, 5.5, "#1f457e", 2.4), plus(48, 107, 3.5, "#7199a6", 2), plus(48, 133, 3.5, "#8ba0bf", 2), plus(35, 120, 3.5, "#7199a6", 2), plus(61, 120, 3.5, "#5c6692", 2)])}
      <div class="sep"></div>
      ${tool(96, 172, svg`<path d="M157 120H125M140 104.500L124.500 120L140 135.500" stroke-width="3.600" />`)}
      ${tool(172, 236, svg`<path d="M187 120H219M204 104.500L219.500 120L204 135.500" stroke=${L} stroke-width="3.400" />`)}
      ${tool(236, 322, [svg`<path d="M272 115H251a6 6 0 0 0 -6 6a5.500 5.500 0 0 0 5.500 5.500H277a6 6 0 0 0 6 -6a6 6 0 0 0 -2.500 -5" stroke=${L} stroke-width="2" /><path d="M271 109.500l8.500 5.500l-8.500 5.500z" fill=${L} stroke="none" />`, caret(305, 120.5, L, 11, 7)])}
      ${tool(322, 380, svg`<rect x="332.500" y="105" width="31" height="30.500" rx="1.500" /><path d="M338 135V126h14v9M344.500 135v-5" />`)}
      ${tool(380, 458, [svg`<ellipse cx="408.500" cy="110" rx="10" ry="5" /><path d="M398.500 110V129q1 4 11 5M418.500 110V121" />`, plus(419, 131, 7.5, D, 4.6)])}
      <div class="sep"></div>
      ${tool(460, 556, [chartFrame(482.5, 103), plus(511, 131, 7.5, D, 4.6), caret(541, 121, G, 11, 7)])}
      ${tool(556, 614, svg`<rect x="576.500" y="103" width="25" height="20" rx="1" /><path d="M582 119v-5M588.500 119v-11M595 119v-8M573 115.500H567V135H592V126M573 130v-4M579 130v-4M585.500 130v-4" />`)}
      ${tool(614, 710, [chartFrame(627, 103), svg`<path d="M649.500 126L660.500 137M660.500 126L649.500 137" stroke="#222" stroke-width="4.400" />`, caret(685, 121, G, 11, 7)])}
      <div class="sep"></div>
      ${tool(712, 788, svg`<rect x="738.500" y="104" width="7" height="7" /><rect x="749.500" y="104" width="7" height="7" /><rect x="760.500" y="104" width="7" height="7" /><rect x="738.500" y="115" width="7" height="7" /><rect x="738.500" y="126" width="7" height="7" /><path d="M769 119Q769 132 754 133.500" /><path d="M763.500 122L769 115l5 7zM758 128.500L751 133.500l7 4.500z" fill=${G} stroke="none" />`)}
      ${tool(788, 852, svg`<g stroke=${L}><path d="M806 105V130" /><path d="M802 127h8l-4 7z" fill=${L} stroke="none" /><rect x="814" y="106" width="9" height="6" /><rect x="814" y="116" width="15" height="6" /><rect x="814" y="126" width="22.500" height="6" /></g>`)}
      ${tool(852, 930, svg`<g stroke=${L}><path d="M870 105V130" /><path d="M866 127h8l-4 7z" fill=${L} stroke="none" /><rect x="878" y="106" width="22.500" height="6" /><rect x="878" y="116" width="15" height="6" /><rect x="878" y="126" width="9" height="6" /></g>`)}
      <div class="sep"></div>
      ${tool(932, 1026, [svg`<path d="M978 106.500l5 2.500l-8.500 19l-5.500 -2.500z" /><path d="M967 128.500l2.500 3.500M965 136.300h22" stroke-width="3" />`, caret(1011, 121, G, 11, 7)])}
      ${tool(1026, 1106, [svg`<path d="M1057 114l-6.500 14.500a3 3 0 0 1 -4 -2l7 -17a5.500 5.500 0 0 1 10.500 3.500l-8 18a6.500 6.500 0 0 1 -12.500 -4l7.500 -17" stroke=${L} stroke-width="2" />`, caret(1091, 121, L, 11, 7)])}
      ${tool(1106, 1170, svg`<rect x="1120" y="106" width="32" height="26" stroke="#999" stroke-width="2" stroke-dasharray="4 2" /><path d="M1130 115v-3.500h13v3.500M1136.500 111.500v15M1133 126.500h7" stroke-width="2" />`)}
      ${tool(1170, 1248, svg`<path d="M1198 106.500l13 8.500l-3.500 1l-3.500 8.500l1 5l-16 -8l5.500 -2.500l4 -8zM1194 126l-4 9" stroke-width="2.200" />`)}
      ${tool(1248, 1474, [svg`<rect x="1249" y="97" width="194" height="44" rx="2" stroke="#d0d0d0" stroke-width="2" />`, caret(1425, 120, "#cfcfcf", 14, 8)])}
      <div class="sep"></div>
      ${tool(1476, 1570, [svg`<rect x="1501.500" y="107" width="7" height="6" /><rect x="1501.500" y="117" width="7" height="6" /><rect x="1501.500" y="127" width="7" height="6" /><rect x="1513.500" y="107" width="25" height="26" rx="1" /><path d="M1519.500 129v-8M1526 129v-18M1532 129v-14" />`, caret(1555, 121, G, 11, 7)])}
      ${tool(1570, 1646, svg`<path d="M1583 109h34" stroke-width="4.400" /><path d="M1600 104v5M1587.500 111v14.500h25.500V111M1600 126v9M1593 135h14" />`)}
      <div class="sep"></div>
    </div>`;
  }

  private pane() {
    return html`<div class="pane">
      <div class="tabs">
        <div class="tab-data">Data</div>
        <div class="tab-analytics"><span>Analytics</span>${cell(384, 418, 162, 216, svg`<path d="M402 178.500l-8 8.700l8 8.700" stroke-width="2.200" />`)}</div>
      </div>
      <div class="sources">
        <div class="source on">${cell(36, 74, 226, 266, [linked(40, 230), svg`<circle cx="64" cy="254.500" r="8" fill="#3182a3" stroke="#e6e6e6" stroke-width="1" /><path d="M60 255l3 3l5.500 -6" stroke="#fff" stroke-width="2" />`])}<span>mappinginequality</span></div>
        <div class="source">${cell(36, 74, 266, 306, cylinder(46, 272, 20, 28, 5.5))}<span>mappinginequality (2)</span></div>
        <div class="source">${cell(36, 74, 306, 346, linked(41, 311))}<span>mappinginequality (3)</span></div>
      </div>
      <div class="search">
        <div class="box"><span>Search</span>${cell(240, 278, 384, 426, svg`<circle cx="258" cy="403" r="6.800" stroke-width="2" /><path d="M253 408l-6 6" stroke-width="2.200" />`)}</div>
        ${cell(280, 404, 382, 428, [svg`<path d="M289 393.500h24l-9.500 11v9.500l-5 0v-9.500z" stroke-width="2.200" /><path d="M324 386v36" stroke="#cfcfcf" stroke-width="2" /><path d="M336 395h4M342 395h7M351 395h9M336 399.500h4M342 399.500h7M351 399.500h9M336 404h4M342 404h7M351 404h9M336 408.500h4M342 408.500h7M351 408.500h9M336 412h4M342 412h7M351 412h9" stroke-width="2" />`, caret(386, 404, G, 15, 8)])}
      </div>
      <div class="folders">Folders</div>
      ${this.field("abc", "Type", "nested")}
      <div class="rule"></div>
      <div class="folder">${cell(0, 93, 567, 608, svg`<path d="M16.500 586l6 5l6 -5" stroke-width="2" /><path d="M46.500 598V580h8.500l2 3h9.500v4" stroke-width="2" fill="#fff" /><path d="M46.500 598l6 -10.500h18.500l-5 10.500z" fill="#8f98a3" stroke-width="2" />`)}<span>Properties</span></div>
      ${properties.map((p) => this.field(p[0], p[1], "nested"))}
      <div class="rule"></div>
      <div class="folder closed">${cell(0, 93, 1109, 1151, svg`<path d="M20.500 1126l6.500 5l-6.500 5" stroke-width="2" /><path d="M48 1140V1122h7.500l1.500 4h11V1140z" fill="#9aa1ab" stroke-width="2" />`)}<span>Source Measures</span></div>
      ${this.field("abc", "Measure Names", "top", true)}
      <div class="rule wide"></div>
      ${measures.map((m) => this.field(m[0], m[1], "", m[2]))}
    </div>`;
  }

  private cards() {
    return html`<div class="cards">
      <div class="card pages">Pages</div>
      <div class="card filters">Filters</div>
      <div class="card marks">
        <h3>Marks</h3>
        <div class="select">${cell(448, 504, 538, 576, svg`<circle cx="482" cy="556" r="11" stroke="#2d2d2d" stroke-width="2" />`)}<span class="name">Circle</span>${cell(687, 724, 538, 576, [svg`<path d="M689 538v38" stroke="#dadada" stroke-width="2" />`, caret(707, 558, G, 14, 8)])}</div>
        <div class="btns">
          <div class="btn">${cell(448, 530, 592, 642, dots(488, 619.5))}Color</div>
          <div class="btn">${cell(546, 626, 592, 642, svg`<g stroke="#2d2d2d" stroke-width="2"><path d="M577.500 616a11 11 0 1 1 13 13" /><circle cx="580" cy="626" r="7" /><path d="M577 623l6 5.500" /></g>`)}Size</div>
          <div class="btn">${cell(642, 724, 592, 642, svg`<g stroke="#2d2d2d"><rect x="669" y="607" width="24" height="24" stroke-width="2.200" /><path d="M675.500 615v-2.500h11v2.500M681 612.500v12.500M678 625h6" stroke-width="2" /></g>`)}Label</div>
          <div class="btn">${cell(448, 530, 688, 738, svg`<g stroke="#2d2d2d" stroke-width="2"><circle cx="487" cy="706" r="3.500" fill="#2d2d2d" /><path d="M487 708v14M477 722v-5h20.500v5" /><circle cx="477" cy="727" r="2.300" /><circle cx="487" cy="727" r="2.300" /><circle cx="497" cy="727" r="2.300" /></g>`)}Detail</div>
          <div class="btn">${cell(546, 626, 688, 738, bubble(572, 702))}Tooltip</div>
        </div>
        <div class="encs">
          <div class="enc">${cell(446, 496, 800, 840, dots(474, 820.5))}<div class="pill">Grade</div></div>
          <div class="enc">${cell(446, 496, 846, 886, bubble(460, 852))}<div class="pill attrib">ATTR(City Sur..</div></div>
        </div>
      </div>
    </div>`;
  }

  private center() {
    return html`<div class="center">
      <div class="shelf"><div class="cap">${cell(754, 803, 162, 214, svg`<path d="M769.500 174v4M777.500 174v4M785.500 174v4M769.500 180v18M777.500 180v18M785.500 180v18" stroke-width="4" />`)}Columns</div><div class="pill green">Longitude (generated)</div></div>
      <div class="shelf"><div class="cap">${cell(754, 803, 230, 282, svg`<path d="M766 246h4M772 246h18M766 254h4M772 254h18M766 262h4M772 262h18" stroke-width="4" />`)}Rows</div><div class="pill green">Latitude (generated)</div></div>
      <div class="view">
        <h1>Sheet 2</h1>
        <div class="viz">${worldMap}<div class="attr">© 2025 Mapbox © OpenStreetMap</div><div class="nulls">11 nulls</div></div>
      </div>
    </div>`;
  }

  private showMe() {
    return html`<div class="showme">
      <div class="smtab">${cell(2660, 2721, 90, 160, svg`<g stroke="none"><path d="M2680 105h25v6h-25z" fill="#87729a" /><path d="M2680 113h32v6h-32z" fill="#83a3cb" /><path d="M2680 121h13v6h-13z" fill="#f3a67c" /><path d="M2680 129h19v6h-19z" fill="#fa7181" /></g>`)}<span>Show Me</span></div>
      <div class="smbody">
        <div class="grid">${thumbs.map(this.thumb)}</div>
        <div class="hint">
          <p class="for">For <b>symbol maps</b> try</p>
          <div class="need"><span class="n1">1 geo</span>${cell(2572, 2607, 1000, 1040, svg`<g transform="translate(2584,1019)">${globe(G)}</g>`)}<div class="pill p1">Dimension</div></div>
          <div class="need"><span class="n2">0 or more</span><div class="pill p2">Dimensions</div></div>
          <div class="need"><span class="n3">0 to 2</span><div class="pill green p3">Measures</div></div>
          <p class="note">May use spatial measure in<br />place of geo dimension</p>
        </div>
      </div>
    </div>`;
  }

  private bottom() {
    return html`<div class="sheets">
      <div class="sheet s0">${cell(0, 47, 1700, 1757, cylinder(20.5, 1718, 14, 21, 4))}<span>Data Source</span></div>
      <div class="sheet s1">Sheet 1</div>
      <div class="sheet s2">Sheet 2</div>
      <div class="sheet">${cell(492, 553, 1700, 1757, [svg`<path d="M531 1731V1717H511V1738H522M516 1732v-4M521 1732v-9M526 1732v-6" stroke-width="2" />`, plus(532, 1738.5, 6.5, G, 4)])}</div>
      <div class="sheet">${cell(555, 617, 1700, 1757, [svg`<path d="M596 1731V1717H575V1737H587M585.500 1717v20M575 1727h21" stroke-width="2" />`, plus(596, 1738.5, 6.5, G, 4)])}</div>
      <div class="sheet">${cell(619, 681, 1700, 1757, [svg`<path d="M660 1730V1717l-11 4l-11 -4V1734l11 4V1721" stroke-width="2" />`, plus(660, 1738.5, 6.5, G, 4)])}</div>
    </div>
    <div class="status">
      <div class="m">0 marks</div><div class="r">1 row by 1 column</div><div class="e1"></div><div class="e2"></div><div class="e2"></div><div class="e3"></div>
      ${cell(2587, 2880, 1760, 1800, svg`<g stroke="none" fill="#bbbbbb"><path d="M2602 1772h2v14h-2zM2614 1772v14l-8 -7zM2644 1772v14l-8 -7zM2668 1772v14l8 -7zM2698 1772v14l8 -7zM2708 1772h2v14h-2z" /><path d="M2726 1760h2v40h-2z" fill="#cacaca" />
        ${[0, 1, 2].map((r) => [0, 1, 2].map((c) => svg`<rect x=${2745 + c * 8} y=${1769 + r * 8} width="6.500" height="6" rx="1" />`))}
        <rect x="2787" y="1769" width="22" height="14" rx="1" />${[0, 1, 2].map((c) => svg`<rect x=${2787 + c * 8} y="1785" width="6" height="6" rx="1" />`)}
        <rect x="2829" y="1769" width="22" height="22" rx="1" fill=${G} /></g>`)}
    </div>`;
  }

  private dialog() {
    return html`<div class="shadow"></div><div class="dialog">
      <div class="bar"><span class="light red"></span><span class="light"></span><span class="light"></span><strong>Special Values for [Longitude (generated)]</strong></div>
      <p class="q q1">The <b>Longitude (generated)</b> axis has 11 null values.</p>
      <p class="q">What do you want to do?</p>
      <div class="opt on"><b>Filter data</b>Exclude the special values from the view and<br />calculations.</div>
      <div class="opt second"><b>Show data at default position</b>Show the special values at a default position on<br />the axis. For example, Null values are shown at<br />0.</div>
    </div>`;
  }

  render() {
    return html`<div class="app">
      <div class="banner">${cell(0, 104, 0, 80, svg`<g stroke="#0c6b94"><path d="M51.500 35h11v9.500h-11zM62.500 35l8.500 -5v19.500l-8.500 -5M73.500 36v7M55.500 44.500v7h3.500V44.500" /></g>`)}<span class="title">Tableau Desktop Public Edition</span><span class="buy">Buy Tableau</span></div>
      ${this.toolbar()}
      <div class="main">${this.pane()}${this.cards()}${this.center()}</div>
      ${this.bottom()}
      ${this.showMe()}
      ${this.dialog()}
      <div class="live"></div>
    </div>`;
  }
}
